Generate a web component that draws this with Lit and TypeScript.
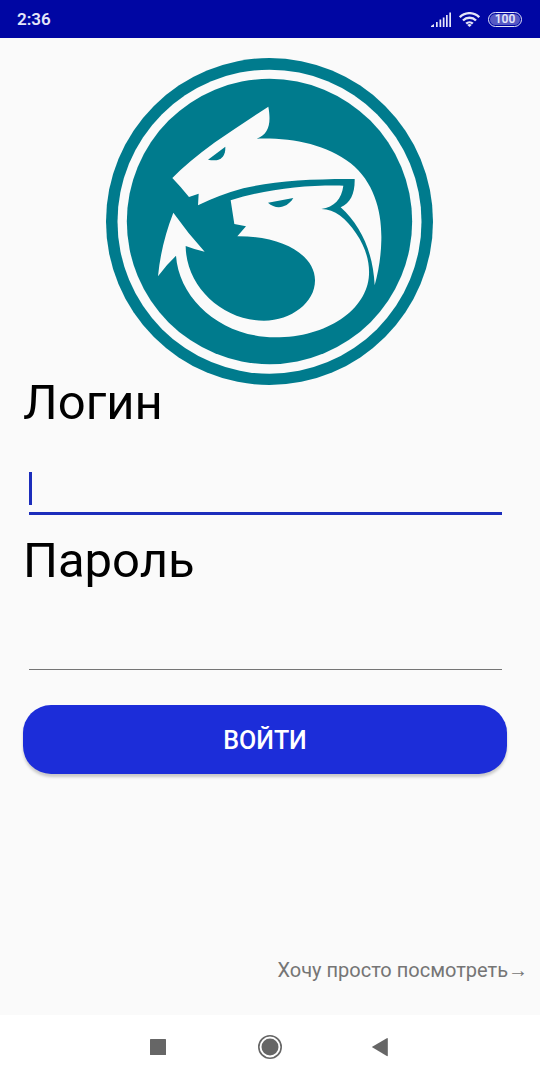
import { LitElement, html, css } from "lit";
import { customElement, state } from "lit/decorators.js";

@customElement("status-bar")
class StatusBar extends LitElement {
  static styles = css`
    :host {
      display: flex;
      align-items: center;
      justify-content: space-between;
      height: 38px;
      padding: 0 18px 0 17px;
      background: #0006a3;
      color: #e4e5f8;
      font-family: Roboto, "Noto Sans", sans-serif;
    }
    .time {
      font-size: 17px;
      line-height: 38px;
      font-weight: 600;
    }
    .icons {
      display: flex;
      align-items: center;
      gap: 8px;
    }
    .icons svg {
      display: block;
      fill: #e4e5f8;
    }
    .battery {
      box-sizing: border-box;
      width: 34px;
      height: 15px;
      padding: 1px;
      border: 1px solid #e4e5f8;
      border-radius: 8px;
    }
    .charge {
      display: block;
      height: 11px;
      border-radius: 6px;
      background: #5658c4;
      font-size: 12px;
      line-height: 11px;
      font-weight: 600;
      text-align: center;
    }
  `;

  render() {
    return html`
      <span class="time">2:36</span>
      <div class="icons">
        <svg width="20" height="15" viewBox="0 0 20 15" aria-hidden="true">
          <path d="M0 15v-1l3-2v3zM5 10h1.700V15H5zM8.500 7.500h1.700V15H8.500zM11.800 5.500h1.700V15h-1.700zM15 3h1.700v12H15zM18.300 0.500H20V15h-1.700z" />
        </svg>
        <svg width="21" height="15" viewBox="0 0 21 15" aria-hidden="true">
          <g fill="none" stroke="#e4e5f8" stroke-width="2.400">
            <path d="M0.800 5.200a13.700 13.700 0 0 1 19.400 0" />
            <path d="M4 8.500a9.200 9.200 0 0 1 13 0" />
            <path d="M7.200 11.700a4.700 4.700 0 0 1 6.600 0" />
          </g>
          <path d="M8.300 13a3.100 3.100 0 0 1 4.400 0L10.500 15z" />
        </svg>
        <div class="battery"><span class="charge">100</span></div>
      </div>
    `;
  }
}

@customElement("dragon-logo")
class DragonLogo extends LitElement {
  static styles = css`
    :host {
      display: block;
    }
    svg {
      display: block;
      width: 100%;
    }
    .teal {
      fill: #007b8d;
    }
    .light {
      fill: #fafafa;
    }
  `;

  render() {
    return html`
      <svg viewBox="18 24 981 981" role="img" aria-label="Dragon emblem">
        <circle class="teal" cx="508.500" cy="514.500" r="490.500" />
        <circle class="light" cx="508.500" cy="515" r="456" />
        <circle class="teal" cx="508.500" cy="514.500" r="428" />
        <path
          class="light"
          d="M217 384Q264 336 345 277Q420 225 505 170C514 220 507 253 470 266C575 263 676 282 752 340C823 397 846 486 844 570C843 622 835 665 824 706C819 603 781 526 722 472C752 459 765 430 764 387C640 386 520 393 430 415Q360 434 294 466L296 431L267 441Q243 411 217 384Z"
        />
        <path class="teal" d="M324 329L376 290C377 320 362 337 324 329Z" />
        <path
          class="light"
          d="M392 451C500 417 616 405 730 407C725 448 703 470 664 477C705 478 737 504 769 551C795 589 809 632 807 674C802 779 681 862 525 862C363 861 237 747 228 617Q199 644 174 679Q183 583 220 488Q263 549 314 605Q285 599 257 588C258 708 365 812 492 812C575 811 646 757 645 690C644 617 552 558 412 559L438 529L403 522Z"
        />
        <path class="teal" d="M504 458L580 444C560 476 527 479 504 458Z" />
      </svg>
    `;
  }
}

@customElement("nav-bar")
class NavBar extends LitElement {
  static styles = css`
    :host {
      display: flex;
      align-items: center;
      justify-content: center;
      gap: 63px;
      box-sizing: border-box;
      height: 65px;
      padding-bottom: 1px;
      background: #ffffff;
    }
    .key {
      display: grid;
      place-items: center;
      width: 48px;
      height: 48px;
      padding: 0;
      border: 0;
      background: none;
      fill: #666666;
    }
  `;

  render() {
    return html`
      <button class="key" aria-label="Recent apps">
        <svg width="24" height="24" viewBox="0 0 24 24"><rect x="3" y="4" width="16" height="16" rx="0.500" /></svg>
      </button>
      <button class="key" aria-label="Home">
        <svg width="24" height="24" viewBox="0 0 24 24">
          <circle cx="12" cy="12" r="11.200" fill="none" stroke="#666666" stroke-width="1.600" />
          <circle cx="12" cy="12" r="8.500" />
        </svg>
      </button>
      <button class="key" aria-label="Back">
        <svg width="24" height="24" viewBox="0 0 24 24"><path d="M2.800 12L17.800 3.200Q18.800 2.800 18.800 4V20.500Q18.800 21.500 17.800 21z" /></svg>
      </button>
    `;
  }
}

@customElement("app-root")
class AppRoot extends LitElement {
  static styles = css`
    :host {
      display: flex;
      flex-direction: column;
      min-height: 100vh;
      background: #fafafa;
      color: #000000;
      font-family: Roboto, "Noto Sans", sans-serif;
    }
    .content {
      flex: 1;
      display: flex;
      flex-direction: column;
      padding: 20px 33px 32px 23px;
    }
    .logo {
      align-self: center;
      width: min(68%, 327px);
      margin-left: 8px;
    }
    .form {
      display: flex;
      flex-direction: column;
    }
    .label {
      font-size: 49px;
      line-height: 36px;
    }
    .field {
      display: flex;
      align-items: flex-end;
      box-sizing: border-box;
      height: 94px;
      margin: 0 5px 28px 6px;
      padding-bottom: 7px;
      border-bottom: 3px solid #1c2dbb;
    }
    .field.idle {
      height: 91px;
      margin-bottom: 35px;
      border-bottom: 1px solid #757575;
    }
    .caret {
      width: 3px;
      height: 33px;
      background: #1c2dbb;
    }
    .input {
      flex: 1;
      min-width: 0;
      height: 33px;
      padding: 0;
      border: 0;
      outline: 0;
      background: none;
      caret-color: transparent;
      font: 28px/33px Roboto, "Noto Sans", sans-serif;
    }
    .submit {
      height: 69px;
      padding: 2px 0 0;
      border: 0;
      border-radius: 28px;
      background: #1c2dd9;
      box-shadow: 0 3px 3px rgba(0, 0, 0, 0.2);
      color: #ffffff;
      font: 500 25px/30px Roboto, "Noto Sans", sans-serif;
    }
    .guest {
      align-self: flex-end;
      margin: auto -21px 0 0;
      color: #757575;
      font-size: 20px;
      line-height: 26px;
      text-decoration: none;
    }
  `;

  @state() private login = "";

  private onLogin(event: Event) {
    this.login = (event.target as HTMLInputElement).value;
  }

  render() {
    return html`
      <status-bar></status-bar>
      <main class="content">
        <dragon-logo class="logo"></dragon-logo>
        <form class="form" @submit=${(e: Event) => e.preventDefault()}>
          <label class="label" for="login">Логин</label>
          <div class="field">
            ${this.login ? "" : html`<span class="caret"></span>`}
            <input class="input" id="login" type="text" autocomplete="off" @input=${this.onLogin} />
          </div>
          <label class="label" for="password">Пароль</label>
          <div class="field idle">
            <input class="input" id="password" type="password" />
          </div>
          <button class="submit" type="submit">ВОЙТИ</button>
        </form>
        <a class="guest" href="#guest">Хочу просто посмотреть→</a>
      </main>
      <nav-bar></nav-bar>
    `;
  }
}
